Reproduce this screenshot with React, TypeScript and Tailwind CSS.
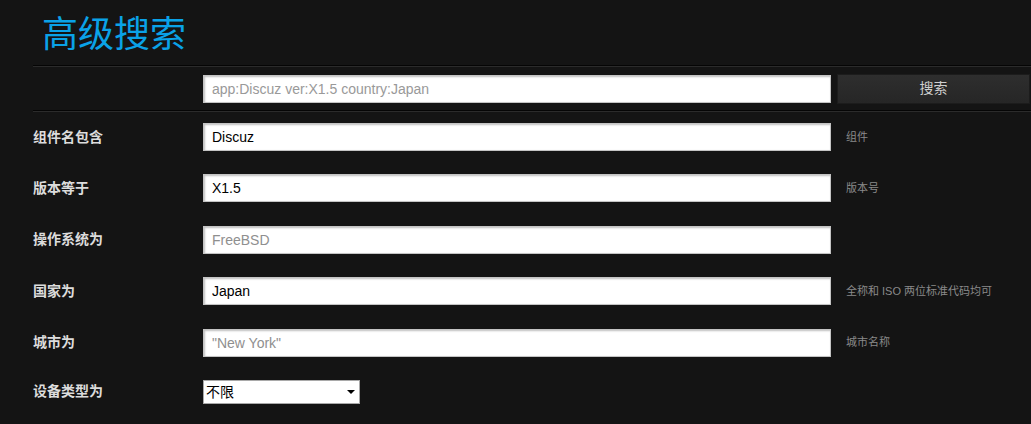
import type { ReactNode } from 'react';

const inputBox =
  'h-[28px] w-[628px] border border-[#c4c4c4] bg-white px-[8px] text-[14px] shadow-[inset_1px_1px_2px_rgba(0,0,0,0.25)] outline-none';

function Divider() {
  return <div className="border-t border-b border-t-[#050505] border-b-[#2b2b2b]" />;
}

function Row({ label, children, hint }: { label: string; children: ReactNode; hint?: string }) {
  return (
    <div className="flex items-center">
      <div className="w-[170px] text-[14px] font-bold text-[#dcdcdc]">{label}</div>
      {children}
      {hint && <div className="ml-[15px] text-[11px] text-[#8a8a8a]">{hint}</div>}
    </div>
  );
}

export default function App() {
  return (
    <div
      className="min-h-screen bg-[#141414] pl-[33px]"
      style={{ fontFamily: '"Liberation Sans", "Noto Sans CJK SC", sans-serif' }}
    >
      <h1 className="flex h-[65px] items-center pl-[9px] pt-[4px] text-[36px] font-normal leading-none text-[#0aa2e8]">
        高级搜索
      </h1>
      <Divider />
      <div className="flex h-[43px] items-center pl-[170px]">
        <input
          className={`${inputBox} text-[#999]`}
          defaultValue="app:Discuz ver:X1.5 country:Japan"
        />
        <button
          type="button"
          className="ml-[6px] h-[30px] w-[193px] border border-[#1c1c1c] bg-gradient-to-b from-[#2e2e2e] to-[#262626] text-[14px] text-[#cfcfcf]"
        >
          搜索
        </button>
      </div>
      <Divider />
      <div className="flex flex-col gap-[23.4px] pt-[11px]">
        <Row label="组件名包含" hint="组件">
          <input className={`${inputBox} text-black`} defaultValue="Discuz" />
        </Row>
        <Row label="版本等于" hint="版本号">
          <input className={`${inputBox} text-black`} defaultValue="X1.5" />
        </Row>
        <Row label="操作系统为">
          <input className={`${inputBox} placeholder:text-[#8f8f8f]`} placeholder="FreeBSD" />
        </Row>
        <Row label="国家为" hint="全称和 ISO 两位标准代码均可">
          <input className={`${inputBox} text-black`} defaultValue="Japan" />
        </Row>
        <Row label="城市为" hint="城市名称">
          <input className={`${inputBox} placeholder:text-[#8f8f8f]`} placeholder={'"New York"'} />
        </Row>
        <Row label="设备类型为">
          <div className="relative h-[24px] w-[157px]">
            <select className="h-full w-full appearance-none border border-[#a9a9a9] bg-white pl-[2px] text-[14px] text-black outline-none">
              <option>不限</option>
            </select>
            <svg
              className="pointer-events-none absolute right-[5px] top-[10px]"
              width="8"
              height="4"
              viewBox="0 0 8 4"
            >
              <path d="M0 0h8L4 4z" fill="#000" />
            </svg>
          </div>
        </Row>
      </div>
    </div>
  );
}
